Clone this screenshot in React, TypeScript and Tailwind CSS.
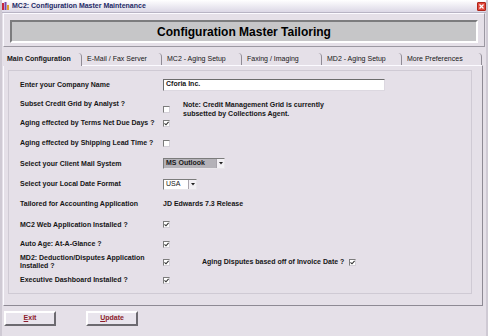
import React from 'react';

const font = { fontFamily: '"Liberation Sans", Arial, sans-serif' };

const Check = ({ checked = false }: { checked?: boolean }) => (
  <div className="w-[7px] h-[7px] shrink-0 bg-white border border-t-[#7c7c7c] border-l-[#7c7c7c] border-b-[#d4d0d8] border-r-[#d4d0d8] flex items-center justify-center">
    {checked && (
      <svg width="5" height="5" viewBox="0 0 5 5">
        <path d="M0.5 2.3 L2 3.8 L4.6 0.8" stroke="#303030" strokeWidth="1.1" fill="none" />
      </svg>
    )}
  </div>
);

const Arrow = () => (
  <div className="w-[8px] h-full bg-[#f2f0f4] border-l border-[#a8a4ac] flex items-center justify-center">
    <svg width="4" height="3" viewBox="0 0 4 3">
      <path d="M0 0 H4 L2 2.5 Z" fill="#202020" />
    </svg>
  </div>
);

const Row = ({ h, label, children, top = false }: { h: string; label: React.ReactNode; children?: React.ReactNode; top?: boolean }) => (
  <div className={`flex ${h} ${top ? 'items-start pt-[6px]' : 'items-center'}`}>
    <div className="w-[143px] shrink-0 leading-[8px]">{label}</div>
    <div className="flex items-center">{children}</div>
  </div>
);

const tabs = ['Main Configuration', 'E-Mail / Fax Server', 'MC2 - Aging Setup', 'Faxing / Imaging', 'MD2 - Aging Setup', 'More Preferences'];

export default function App() {
  return (
    <div className="w-[488px] h-[336px] bg-[#e5e0e8] text-[#161616] text-[7px] overflow-hidden border-x-2 border-[#cfcad4] relative" style={font}>
      {/* title bar */}
      <div className="h-[13px] -mx-[2px] bg-gradient-to-b from-[#ffffff] to-[#dcd8e6] border-b border-[#b8b4c4] flex items-center px-[2px]">
        <svg width="7" height="8" viewBox="0 0 7 8" className="mr-[3px]">
          <rect x="0" y="1" width="2" height="7" fill="#c8283c" />
          <rect x="2.5" y="0" width="2" height="8" fill="#7a4aa8" />
          <rect x="5" y="3" width="2" height="5" fill="#e0a030" />
        </svg>
        <span className="font-bold text-[#1e2a66] text-[7px]">MC2: Configuration Master Maintenance</span>
        <div className="ml-auto w-[9px] h-[9px] bg-[#e0483c] rounded-[1px] border border-[#b02418] flex items-center justify-center">
          <svg width="5" height="5" viewBox="0 0 5 5">
            <path d="M0.5 0.5 L4.5 4.5 M4.5 0.5 L0.5 4.5" stroke="#fff" strokeWidth="1.2" />
          </svg>
        </div>
      </div>

      {/* header */}
      <div className="mx-[1px] border border-t-[#fbfaff] border-l-[#fbfaff] border-b-[#9c98a2] border-r-[#9c98a2] pt-[6px] pb-[3px] px-[6px]">
        <div className="h-[23px] bg-[#c6c6c8] border-2 border-t-[#7c7c7e] border-l-[#7c7c7e] border-b-white border-r-white flex items-center justify-center text-[12px] font-bold text-black">
          Configuration Master Tailoring
        </div>
      </div>

      {/* tabs */}
      <div className="mt-[6px] h-[12px] flex pl-[0px] relative z-10">
        {tabs.map((t, i) => (
          <div
            key={t}
            className={`w-[80px] h-[12px] pl-[5px] flex items-center border-r border-[#908c96] rounded-tr-[4px] ${i === 0 ? 'font-bold bg-[#e5e0e8] -mb-px h-[13px]' : 'font-normal'}`}
          >
            {t}
          </div>
        ))}
      </div>

      {/* tab panel */}
      <div className="h-[241px] w-[480px] ml-[1px] border border-t-[#fbfaff] border-l-[#fbfaff] border-b-[#8e8a94] border-r-[#8e8a94] pt-[4px] pl-[4px]">
        <div className="w-[464px] h-[224px] border border-[#cfcad4] pt-[4px] pl-[11px] font-bold">
          <Row h="h-[19px]" label="Enter your Company Name">
            <div className="w-[222px] h-[12px] bg-white border border-t-[#6c6c6c] border-l-[#6c6c6c] border-b-[#dcd8e0] border-r-[#dcd8e0] flex items-center pl-[2px]">
              Cforia Inc.
            </div>
          </Row>
          <Row h="h-[19px]" top label="Subset Credit Grid by Analyst ?">
            <div className="mt-[1px]"><Check /></div>
            <div className="ml-[13px] leading-[9px] -mt-[0.5px]">
              Note: Credit Management Grid is currently<br />subsetted by Collections Agent.
            </div>
          </Row>
          <Row h="h-[20px]" label="Aging effected by Terms Net Due Days ?">
            <Check checked />
          </Row>
          <Row h="h-[20px]" label="Aging effected by Shipping Lead Time ?">
            <Check />
          </Row>
          <Row h="h-[21px]" label="Select your Client Mail System">
            <div className="w-[62px] h-[11px] bg-[#b4b2b8] border border-t-[#7c7c7c] border-l-[#7c7c7c] border-b-[#e8e6ea] border-r-[#e8e6ea] flex items-center">
              <span className="flex-1 pl-[2px] text-[#1a1a1a]">MS Outlook</span>
              <Arrow />
            </div>
          </Row>
          <Row h="h-[20px]" label="Select your Local Date Format">
            <div className="w-[34px] h-[11px] bg-white border border-t-[#7c7c7c] border-l-[#7c7c7c] border-b-[#e8e6ea] border-r-[#e8e6ea] flex items-center font-normal">
              <span className="flex-1 pl-[2px]">USA</span>
              <Arrow />
            </div>
          </Row>
          <Row h="h-[20px]" label="Tailored for Accounting Application">
            <span>JD Edwards 7.3 Release</span>
          </Row>
          <Row h="h-[21px]" label="MC2 Web Application Installed ?">
            <Check checked />
          </Row>
          <Row h="h-[18px]" label="Auto Age:  At-A-Glance ?">
            <Check checked />
          </Row>
          <Row h="h-[18px]" label={<>MD2: Deduction/Disputes Application<br />Installed ?</>}>
            <Check checked />
            <span className="ml-[32px] mr-[5px]">Aging Disputes based off of Invoice Date ?</span>
            <Check checked />
          </Row>
          <Row h="h-[18px]" label="Executive Dashboard Installed ?">
            <Check checked />
          </Row>
        </div>
      </div>

      {/* buttons */}
      <div className="flex mt-[5px] pl-[2px] gap-[30px]">
        {['Exit', 'Update'].map((b) => (
          <button
            key={b}
            className="w-[52px] h-[15px] bg-[#e9e5ed] border-2 border-t-white border-l-white border-b-[#6c6a70] border-r-[#6c6a70] text-[#8c1c2c] font-bold text-[7px] flex items-center justify-center"
          >
            <span><span className="underline">{b[0]}</span>{b.slice(1)}</span>
          </button>
        ))}
      </div>
    </div>
  );
}
